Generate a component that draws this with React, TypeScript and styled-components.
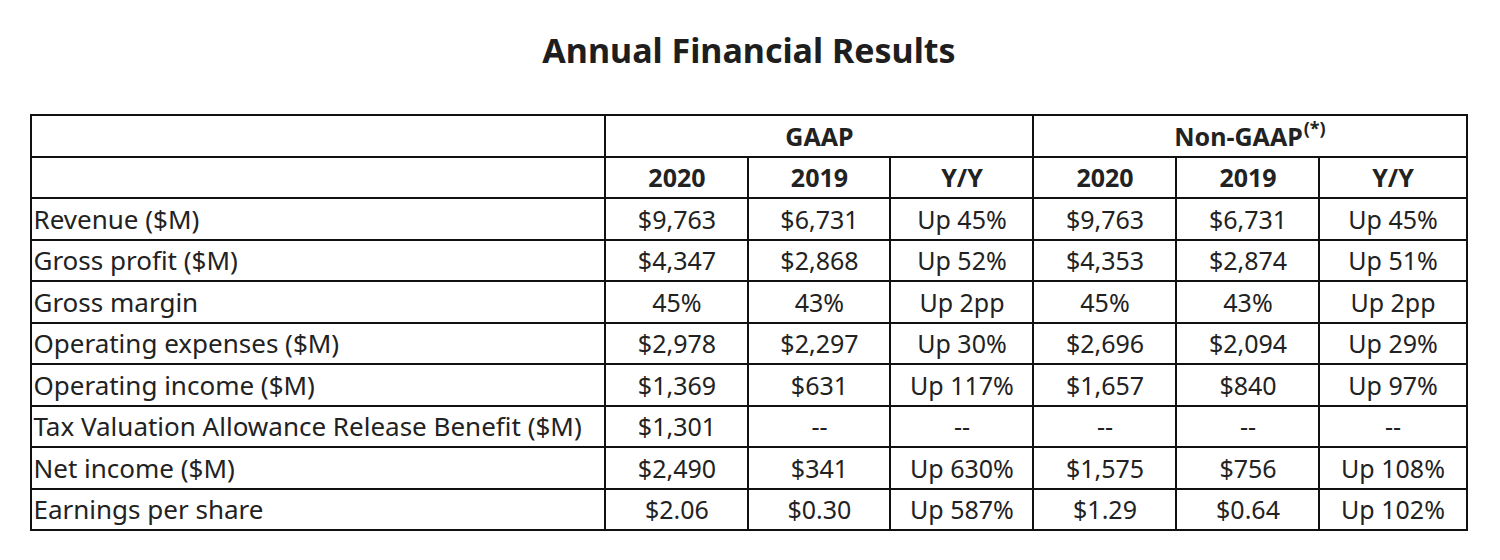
import React from 'react';
import styled, { createGlobalStyle } from 'styled-components';

const GlobalStyle = createGlobalStyle`
    html, body {
        margin: 0;
        padding: 0;
        background: #ffffff;
    }
    body {
        font-family: "Noto Sans", "Open Sans", sans-serif;
        color: #222222;
    }
`;

type Row = {
    label: string;
    values: string[];
};

const rows: Row[] = [
    { label: 'Revenue ($M)', values: ['$9,763', '$6,731', 'Up 45%', '$9,763', '$6,731', 'Up 45%'] },
    { label: 'Gross profit ($M)', values: ['$4,347', '$2,868', 'Up 52%', '$4,353', '$2,874', 'Up 51%'] },
    { label: 'Gross margin', values: ['45%', '43%', 'Up 2pp', '45%', '43%', 'Up 2pp'] },
    { label: 'Operating expenses ($M)', values: ['$2,978', '$2,297', 'Up 30%', '$2,696', '$2,094', 'Up 29%'] },
    { label: 'Operating income ($M)', values: ['$1,369', '$631', 'Up 117%', '$1,657', '$840', 'Up 97%'] },
    { label: 'Tax Valuation Allowance Release Benefit ($M)', values: ['$1,301', '--', '--', '--', '--', '--'] },
    { label: 'Net income ($M)', values: ['$2,490', '$341', 'Up 630%', '$1,575', '$756', 'Up 108%'] },
    { label: 'Earnings per share', values: ['$2.06', '$0.30', 'Up 587%', '$1.29', '$0.64', 'Up 102%'] },
];

const colWidths = [574, 143, 142, 143, 143, 143, 147];

const Page = styled.div`
    display: flex;
    flex-direction: column;
    align-items: center;
    padding: 28px 0 0 0;
    width: 1498px;
`;

const Title = styled.h1`
    margin: 0 0 42px 0;
    font-size: 34px;
    line-height: 44px;
    font-weight: 700;
    color: #1e1e1e;
`;

const Table = styled.table`
    border-collapse: collapse;
    border: 2px solid #111111;
    table-layout: fixed;
    width: 1436px;
`;

const Tr = styled.tr`
    height: 41.5px;
`;

const Cell = styled.td<{ $label?: boolean }>`
    border: 2px solid #111111;
    padding: 0 1px;
    font-size: ${({ $label }) => ($label ? '26px' : '25px')};
    line-height: 28px;
    text-align: ${({ $label }) => ($label ? 'left' : 'center')};
    white-space: nowrap;
    color: #222222;
`;

const HeadCell = styled.th`
    border: 2px solid #111111;
    padding: 0;
    font-size: 25px;
    line-height: 28px;
    font-weight: 700;
    text-align: center;
    color: #222222;
`;

const Sup = styled.sup`
    font-size: 18px;
    vertical-align: 11px;
    line-height: 0;
    margin-left: 1px;
`;

function App() {
    return (
        <>
            <GlobalStyle />
            <Page>
                <Title>Annual Financial Results</Title>
                <Table>
                    <colgroup>
                        {colWidths.map((w, i) => (
                            <col key={i} style={{ width: w }} />
                        ))}
                    </colgroup>
                    <thead>
                        <Tr>
                            <HeadCell />
                            <HeadCell colSpan={3}>GAAP</HeadCell>
                            <HeadCell colSpan={3}>
                                Non-GAAP<Sup>(*)</Sup>
                            </HeadCell>
                        </Tr>
                        <Tr>
                            <HeadCell />
                            <HeadCell>2020</HeadCell>
                            <HeadCell>2019</HeadCell>
                            <HeadCell>Y/Y</HeadCell>
                            <HeadCell>2020</HeadCell>
                            <HeadCell>2019</HeadCell>
                            <HeadCell>Y/Y</HeadCell>
                        </Tr>
                    </thead>
                    <tbody>
                        {rows.map((row) => (
                            <Tr key={row.label}>
                                <Cell $label>{row.label}</Cell>
                                {row.values.map((v, i) => (
                                    <Cell key={i}>{v}</Cell>
                                ))}
                            </Tr>
                        ))}
                    </tbody>
                </Table>
            </Page>
        </>
    );
}

export default App;
